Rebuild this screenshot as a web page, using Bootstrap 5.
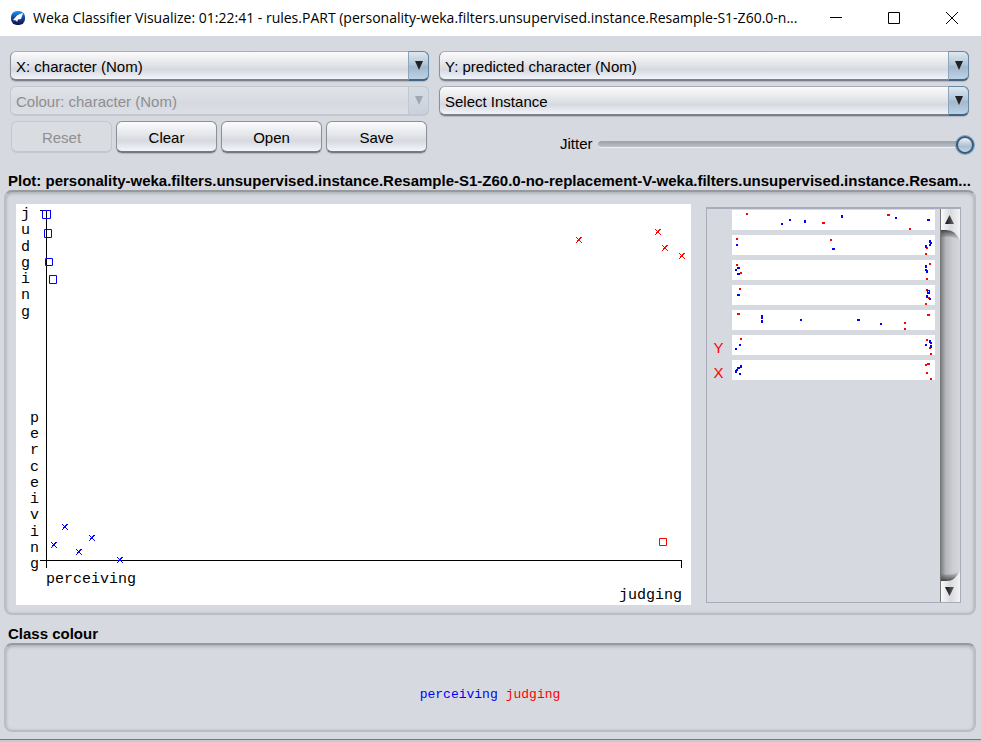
<!DOCTYPE html>
<html lang="en">
<head>
<meta charset="utf-8">
<meta name="viewport" content="width=device-width, initial-scale=1">
<title>Weka Classifier Visualize</title>
<link rel="stylesheet" href="https://cdn.jsdelivr.net/npm/bootstrap@5.3.0/dist/css/bootstrap.min.css">
<style>
body{background:#d6d9df;color:#000;font:15px/20px "Liberation Sans",Arial,sans-serif;min-height:100vh}
.titlebar{height:36px;background:#fff;padding-left:10px;font:14px/34px "Open Sans","Noto Sans",sans-serif}
.titlebar .app-icon{margin-right:7px}
.titlebar .caption-text{min-width:0}
.win-btn{flex:0 0 58px;height:34px;border:0;background:none;padding:0;display:flex;align-items:center;justify-content:center}
.controls{padding:15px 12px 0 10px;display:grid;grid-template-columns:419fr 530fr;column-gap:10px;row-gap:5px}
.combo{position:relative;height:30px}
.combo select{appearance:none;width:100%;height:30px;padding:2px 26px 0 5px;border:1px solid #8d9098;border-top-color:#a9acb5;border-bottom:2px solid #7c808a;border-radius:6px;color:#000;opacity:1;background:linear-gradient(#fbfbfc,#e3e5e9 45%,#d6d9df 65%,#f2f4fb);box-shadow:0 1px 1px #b4b8c2}
.combo::after{content:"";position:absolute;right:0;top:0;width:21px;height:30px;border:1px solid #6788a3;border-left-color:#8ba6bc;border-bottom:2px solid #426482;border-radius:0 6px 6px 0;background:linear-gradient(#dfe8f0,#b0c5d6 48%,#a2b8cb 55%,#bdd2e7);pointer-events:none}
.combo::before{content:"";position:absolute;z-index:1;right:6px;top:10px;width:8px;height:9px;background:#222;clip-path:polygon(0 0,100% 0,50% 100%);pointer-events:none}
.combo.off select{color:#8e8f91;border-color:#c4c7ce;background:linear-gradient(#e1e4e8,#d6d9df 60%,#dcdfe5);box-shadow:none}
.combo.off::after{border-color:#c0c8d2;background:linear-gradient(#d5dce4,#c9d2dc)}
.combo.off::before{background:#a2a7ae}
.metal{width:101px;height:32px;padding:2px 0 0;border:1px solid #8d9098;border-bottom:2px solid #747882;border-radius:6px;font-size:15px;line-height:20px;color:#000;background:linear-gradient(#fcfcfd,#e3e5e9 45%,#d6d9df 65%,#f4f6fc);box-shadow:0 1px 1px #b4b8c2}
.metal:disabled{opacity:1;color:#8e8f91;border-color:#c4c7ce;background:#d9dce1;box-shadow:none}
.btn-row{gap:4px;padding-left:1px}
.jitter{padding:13px 0 0 121px;gap:5px;margin-right:-5px}
.slide{appearance:none;flex:1;min-width:0;height:20px;margin:0;background:none}
.slide::-webkit-slider-runnable-track{height:7px;border-radius:4px;border-top:1px solid #a0a4ad;border-bottom:1px solid #eef0f5;background:linear-gradient(#9fa3ac,#bcc0c9)}
.slide::-webkit-slider-thumb{appearance:none;width:18px;height:18px;margin-top:-6px;border:2px solid #3c5872;border-radius:50%;background:linear-gradient(#eef2f6,#a9bfd2 60%,#c3d5e6);box-shadow:0 0 0 1px #74a3d0}
.group-title{font-weight:bold;padding:2px 8px 0;margin:0;font-size:15px;line-height:18px}
.group-box{margin:0 5px 0 4px;border:2px solid #bbbdc2;border-top-color:#97999e;border-radius:8px;box-shadow:inset 0 2px 3px #b3b5ba,inset 0 0 3px #bfc1c5}
.plot-box{padding:12px 13px 8px 10px;gap:15px}
.plot-area{flex:1;min-width:0}
.plot-area svg{display:block;width:100%;height:auto;background:#fff}
svg text{font-family:"Liberation Mono","Courier New",monospace;font-size:15px}
.attrs{flex:0 0 254px;margin-top:3px;margin-bottom:2px;border:1px solid #a9adb9;border-width:2px 1px 1px}
.attr-rows{flex:1;min-width:0;padding:1px 5px 0 0}
.attr{display:flex;align-items:flex-end;margin-bottom:5px;height:20px}
.attr span{flex:0 0 25px;padding-right:2px;text-align:center;color:red;font-size:15px;line-height:14px}
.attr svg{display:block;flex:1;height:20px;min-width:0;background:#fff}
.scroller{width:20px;border-left:1px solid #777;background:linear-gradient(90deg,#7e7f82,#b5b6ba 25%,#cbccd1 60%,#d6d7dc)}
.scroller button{display:block;border:0;padding:0;background:none;line-height:0}
.legend-box{height:89px;font:13px/16px "Liberation Mono","Courier New",monospace;padding-top:14px}
.tone-a{color:#00f}
.tone-b{color:red}
.win-foot{height:3px;border-top:1px solid #75777c;background:#c9cacd;margin-top:7px}
</style>
<script src="https://cdn.jsdelivr.net/npm/bootstrap@5.3.0/dist/js/bootstrap.bundle.min.js"></script>
</head>
<body class="d-flex flex-column">
<header class="titlebar d-flex align-items-center">
  <svg class="app-icon flex-shrink-0" width="16" height="16" viewBox="0 0 16 16" aria-hidden="true">
    <defs><linearGradient id="sky" x2="0" y2="1"><stop stop-color="#1d9cf5"/><stop offset=".45" stop-color="#164a9c"/><stop offset="1" stop-color="#120d4c"/></linearGradient></defs>
    <rect x="1" y="1" width="14" height="14" rx="6" fill="url(#sky)"/>
    <path d="M3 10 7 5.500 10 4 13 3 12 6 11 9 8 9.500 7 12 6 10.500Z" fill="#fff"/>
  </svg>
  <span class="caption-text text-nowrap overflow-hidden flex-grow-1">Weka Classifier Visualize: 01:22:41 - rules.PART (personality-weka.filters.unsupervised.instance.Resample-S1-Z60.0-n...</span>
  <button class="win-btn" aria-label="Minimize"><svg width="12" height="12"><path d="M0 5.500H12" stroke="#000"/></svg></button>
  <button class="win-btn" aria-label="Maximize"><svg width="12" height="12"><path d="M.5.5H11.500V11.500H.5Z" fill="none" stroke="#000"/></svg></button>
  <button class="win-btn" aria-label="Close"><svg width="12" height="12"><path d="M0 0 12 12M12 0 0 12" stroke="#000"/></svg></button>
</header>

<main>
  <section class="controls">
    <div class="combo"><select aria-label="X axis"><option>X: character (Nom)</option></select></div>
    <div class="combo"><select aria-label="Y axis"><option>Y: predicted character (Nom)</option></select></div>
    <div class="combo off"><select aria-label="Colour" disabled><option>Colour: character (Nom)</option></select></div>
    <div class="combo"><select aria-label="Instance"><option>Select Instance</option></select></div>
    <div class="btn-row d-flex">
      <button class="metal" disabled>Reset</button>
      <button class="metal">Clear</button>
      <button class="metal">Open</button>
      <button class="metal">Save</button>
    </div>
    <div class="jitter d-flex align-items-center">
      <label for="jitter">Jitter</label>
      <input class="slide" id="jitter" type="range" min="0" max="50" value="50">
    </div>
  </section>

  <h2 class="group-title text-nowrap overflow-hidden mt-3">Plot: personality-weka.filters.unsupervised.instance.Resample-S1-Z60.0-no-replacement-V-weka.filters.unsupervised.instance.Resam...</h2>
  <section class="group-box plot-box d-flex">
    <div class="plot-area">
      <svg viewBox="0 0 675 401" role="img" aria-label="Scatter plot of predicted against actual character">
        <defs><path id="cross" d="M0 0h1v1H0zM4 0h2v1H4zM1 1h1v1H1zM3 1h2v1H3zM2 2h2v1H2zM1 3h3v1H1zM1 4h1v1H1zM4 4h1v1H4zM0 5h1v1H0zM5 5h1v1H5z" shape-rendering="crispEdges"/></defs>
        <path d="M24 6.500H35M30.500 6V364M24 356.500H666M665.500 356V364" stroke="#000" fill="none"/>
        <g>
          <text x="5" y="14">j</text><text x="5" y="30">u</text><text x="5" y="47">d</text><text x="5" y="63">g</text><text x="5" y="79">i</text><text x="5" y="95">n</text><text x="5" y="112">g</text>
          <text x="14" y="218">p</text><text x="14" y="234">e</text><text x="14" y="250">r</text><text x="14" y="267">c</text><text x="14" y="283">e</text><text x="14" y="299">i</text><text x="14" y="315">v</text><text x="14" y="332">i</text><text x="14" y="348">n</text><text x="14" y="364">g</text>
          <text x="30" y="379">perceiving</text><text x="603" y="395">judging</text>
        </g>
        <g fill="none" stroke="#00f">
          <path d="M26.500 6.500h8v8h-8zM28.500 25.500h7v8h-7zM29.500 54.500h7v7h-7zM33.500 71.500h7v8h-7z"/>
          <path d="M643.500 334.500h7v7h-7z" stroke="red"/>
        </g>
        <g fill="#00f"><use href="#cross" x="35" y="338"/><use href="#cross" x="46" y="320"/><use href="#cross" x="60" y="345"/><use href="#cross" x="73" y="331"/><use href="#cross" x="101" y="353"/></g>
        <g fill="red"><use href="#cross" x="560" y="33"/><use href="#cross" x="639" y="25"/><use href="#cross" x="646" y="41"/><use href="#cross" x="663" y="49"/></g>
      </svg>
    </div>
    <div class="attrs d-flex">
      <div class="attr-rows">
        <div class="attr"><span></span><svg viewBox="0 0 203 20" preserveAspectRatio="none">
          <path fill="red" d="M14 3h2v2h-2zM90 12h3v2h-3zM155 4h3v2h-3zM177 18h2v2h-2z"/><path fill="#00f" d="M49 13h2v2h-2zM57 9h2v2h-2zM72 10h2v3h-2zM109 5h2v3h-2zM163 7h2v2h-2zM195 9h3v2h-3z"/></svg></div>
        <div class="attr"><span></span><svg viewBox="0 0 203 20" preserveAspectRatio="none">
          <path fill="red" d="M4 3h2v2h-2zM98 4h2v2h-2zM194 12h2v2h-2zM193 18h2v2h-2z"/><path fill="#00f" d="M4 9h2v2h-2zM100 13h3v2h-3zM197 5h2v3h-2zM198 7h2v2h-2zM197 9h2v2h-2zM193 10h2v3h-2z"/></svg></div>
        <div class="attr"><span></span><svg viewBox="0 0 203 20" preserveAspectRatio="none">
          <path fill="red" d="M4 4h2v2h-2zM8 12h2v2h-2zM197 3h2v2h-2zM194 18h2v2h-2z"/><path fill="#00f" d="M5 7h3v2h-3zM3 9h2v2h-2zM5 13h3v2h-3zM193 5h2v3h-2zM193 9h2v2h-2zM194 10h2v3h-2z"/></svg></div>
        <div class="attr"><span></span><svg viewBox="0 0 203 20" preserveAspectRatio="none">
          <path fill="red" d="M7 3h2v2h-2zM194 4h2v2h-2zM196 12h2v2h-2zM193 18h2v2h-2z"/><path fill="#00f" fill-rule="evenodd" d="M5 9h3v2h-3zM195 5h3v4h-3zM196 6h1v1h-1zM194 10h2v3h-2zM197 13h2v2h-2z"/></svg></div>
        <div class="attr"><span></span><svg viewBox="0 0 203 20" preserveAspectRatio="none">
          <path fill="red" d="M5 3h3v2h-3zM172 12h2v2h-2zM172 18h2v2h-2zM195 4h3v2h-3z"/><path fill="#00f" d="M29 5h2v4h-2zM29 10h2v3h-2zM68 9h2v2h-2zM125 9h3v2h-3zM148 13h2v2h-2z"/></svg></div>
        <div class="attr"><span>Y</span><svg viewBox="0 0 203 20" preserveAspectRatio="none">
          <path fill="red" d="M8 3h2v2h-2zM194 4h2v2h-2zM197 12h2v2h-2zM198 18h2v2h-2z"/><path fill="#00f" d="M7 9h2v2h-2zM3 13h2v2h-2zM197 5h2v3h-2zM198 7h2v2h-2zM193 9h2v2h-2zM198 10h2v3h-2z"/></svg></div>
        <div class="attr"><span>X</span><svg viewBox="0 0 203 20" preserveAspectRatio="none">
          <path fill="red" d="M193 4h2v2h-2zM195 3h3v2h-3zM194 12h2v2h-2zM198 18h2v2h-2z"/><path fill="#00f" d="M8 5h2v3h-2zM5 7h3v2h-3zM4 9h2v2h-2zM3 10h2v3h-2zM7 13h2v2h-2z"/></svg></div>
      </div>
      <div class="scroller d-flex flex-column justify-content-between">
        <button aria-label="Scroll up"><svg width="19" height="34" viewBox="0 0 19 34">
          <defs>
            <linearGradient id="cap"><stop stop-color="#fafafb"/><stop offset=".5" stop-color="#d8dade"/><stop offset="1" stop-color="#f2f3f5"/></linearGradient>
            <linearGradient id="fade" x2="0" y2="1"><stop stop-color="#333"/><stop offset="1" stop-color="#777" stop-opacity="0"/></linearGradient>
            <linearGradient id="tri"><stop stop-color="#111"/><stop offset="1" stop-color="#666"/></linearGradient>
          </defs>
          <path d="M0 20H8Q15 23 18 31Q12 26 0 28Z" fill="url(#fade)"/>
          <path d="M0 0H19V31Q15 21 5 21H0Z" fill="url(#cap)"/>
          <path d="M4 15 8.500 6 13 15Z" fill="url(#tri)"/></svg></button>
        <button aria-label="Scroll down"><svg width="19" height="34" viewBox="0 0 19 34">
          <g transform="matrix(1 0 0 -1 0 34)"><path d="M0 20H8Q15 23 18 31Q12 26 0 28Z" fill="url(#fade)"/><path d="M0 0H19V31Q15 21 5 21H0Z" fill="url(#cap)"/><path d="M4 15 8.500 6 13 15Z" fill="url(#tri)"/></g></svg></button>
      </div>
    </div>
  </section>

  <h2 class="group-title mt-2">Class colour</h2>
  <section class="group-box legend-box d-flex align-items-center justify-content-center">
    <button class="tone-a border-0 bg-transparent p-0">perceiving</button>
    <button class="tone-b border-0 bg-transparent p-0 ms-2">judging</button>
  </section>
</main>
<footer class="win-foot"></footer>
</body>
</html>
